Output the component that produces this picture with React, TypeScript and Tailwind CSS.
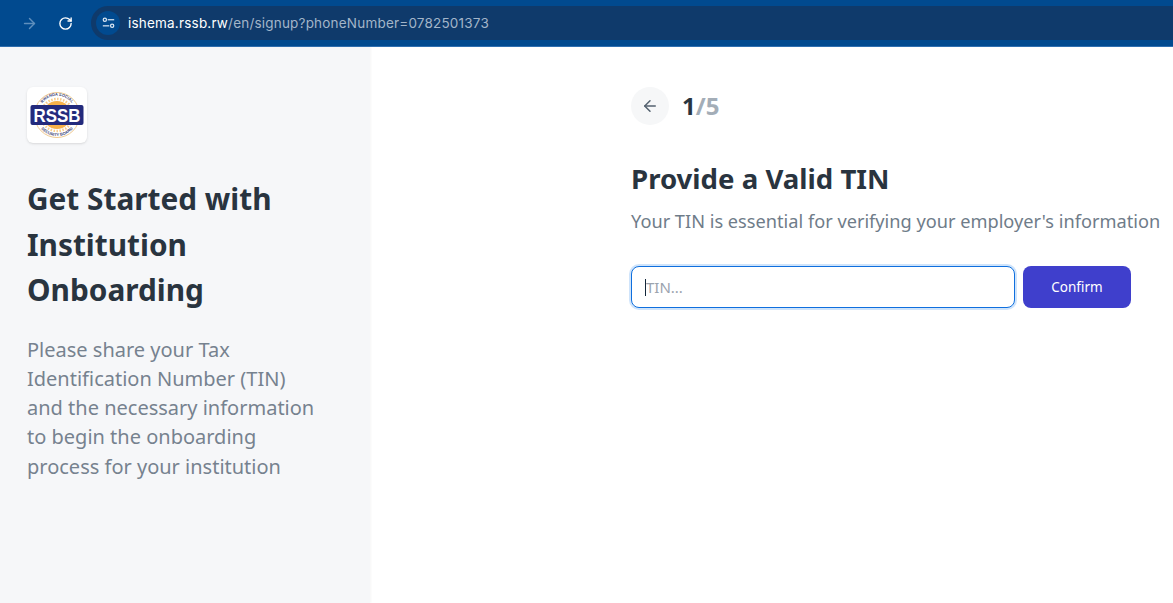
import { ArrowLeft, ArrowRight, RotateCw } from 'lucide-react';

function TuneIcon() {
  return (
    <svg width="13" height="12" viewBox="0 0 16 14" fill="none" stroke="#dbe7f3" strokeWidth="1.5">
      <circle cx="3.5" cy="3" r="2" />
      <path d="M7 3h8" />
      <path d="M1 10.5h8" />
      <circle cx="12.5" cy="10.5" r="2" />
    </svg>
  );
}

function RssbLogo() {
  return (
    <div className="w-[60px] h-[56px] rounded-md bg-white shadow-sm flex items-center justify-center">
      <svg width="56" height="50" viewBox="0 0 56 50">
        <circle cx="28" cy="25" r="22.5" fill="#fff" stroke="#efc98f" strokeWidth="1" />
        <circle cx="28" cy="25" r="14" fill="#f7b24a" />
        <circle cx="28" cy="25" r="16" fill="none" stroke="#f9cd8a" strokeWidth="2.5" strokeDasharray="1.5 1.5" />
        <path id="rssb-top" d="M11 17 A18.5 18.5 0 0 1 45 17" fill="none" />
        <path id="rssb-bottom" d="M9.5 35 A21 21 0 0 0 46.5 35" fill="none" />
        <text fontSize="4" fontWeight="700" fill="#3a3f78" fontFamily="Liberation Sans, sans-serif">
          <textPath href="#rssb-top" startOffset="50%" textAnchor="middle">RWANDA SOCIAL</textPath>
        </text>
        <text fontSize="4" fontWeight="700" fill="#3a3f78" fontFamily="Liberation Sans, sans-serif">
          <textPath href="#rssb-bottom" startOffset="50%" textAnchor="middle">SECURITY BOARD</textPath>
        </text>
        <rect x="1.5" y="15" width="53" height="20" rx="2" fill="#232a7c" />
        <text x="28" y="31.5" textAnchor="middle" fontSize="18.5" fontWeight="700" fill="#fff" textLength="47" lengthAdjust="spacingAndGlyphs" fontFamily="Liberation Sans, sans-serif">RSSB</text>
      </svg>
    </div>
  );
}

export default function App() {
  return (
    <div className="h-[603px] w-[1173px] overflow-hidden flex flex-col bg-white font-['Noto_Sans',sans-serif]">
      <div className="h-[47px] shrink-0 bg-[#014a8f] border-b border-[#2f6fb0] flex items-start pt-[6px]">
        <div className="w-[91px] h-[34px] shrink-0 flex items-center pl-[21px] gap-[20px]">
          <ArrowRight size={17} className="text-[#5f8fbd]" />
          <RotateCw size={15} strokeWidth={2.2} className="text-white" />
        </div>
        <div className="flex-1 h-[34px] bg-[#0f3a6b] rounded-l-full flex items-center pl-[5px]">
          <div className="w-[24px] h-[24px] rounded-full bg-[#014a8f] flex items-center justify-center">
            <TuneIcon />
          </div>
          <div className="ml-[8px] text-[13.5px] tracking-[0.2px] font-['Inter',sans-serif]">
            <span className="text-white">ishema.rssb.rw</span>
            <span className="text-[#a3b5c9]">/en/signup?phoneNumber=0782501373</span>
          </div>
        </div>
      </div>

      <div className="flex-1 flex min-h-0">
        <aside className="w-[370px] shrink-0 bg-[#f6f7f9] shadow-[1px_0_2px_rgba(0,0,0,0.04)] pl-[27px] pr-[50px] pt-[40px]">
          <RssbLogo />
          <h1 className="mt-[33px] text-[29.8px] leading-[45.5px] font-bold text-[#29343f]">
            Get Started with Institution Onboarding
          </h1>
          <p className="mt-[22px] text-[20px] leading-[29.3px] text-[#76828f]">
            Please share your Tax Identification Number (TIN) and the necessary information to begin the onboarding process for your institution
          </p>
        </aside>

        <main className="flex-1 pl-[261px] pt-[40px]">
          <div className="flex items-center gap-[13px]">
            <button type="button" className="w-[38px] h-[38px] rounded-full bg-[#f6f7f8] flex items-center justify-center">
              <ArrowLeft size={18} className="text-[#54626f]" />
            </button>
            <div className="text-[24px] font-bold">
              <span className="text-[#29343f]">1</span>
              <span className="text-[#a3adb7]">/5</span>
            </div>
          </div>

          <h2 className="mt-[34px] text-[27.6px] leading-[38px] font-bold text-[#29343f]">Provide a Valid TIN</h2>
          <p className="mt-[10px] text-[18.2px] leading-[28px] text-[#6f7c89] whitespace-nowrap">
            Your TIN is essential for verifying your employer's information
          </p>

          <div className="mt-[31px] flex items-center gap-[8px]">
            <div className="relative w-[384px]">
              <input
                className="w-full h-[42px] rounded-lg border border-[#0f6fde] bg-white pl-[14px] text-[15px] text-[#29343f] outline-none ring-2 ring-[#cfe4fb] placeholder:text-[#9ba3ae]"
                placeholder="TIN..."
              />
              <span className="absolute left-[14px] top-[13px] w-px h-[17px] bg-[#12263a]" />
            </div>
            <button type="button" className="w-[108px] h-[42px] rounded-lg bg-[#3f3fcc] text-white text-[13.5px]">
              Confirm
            </button>
          </div>
        </main>
      </div>
    </div>
  );
}
